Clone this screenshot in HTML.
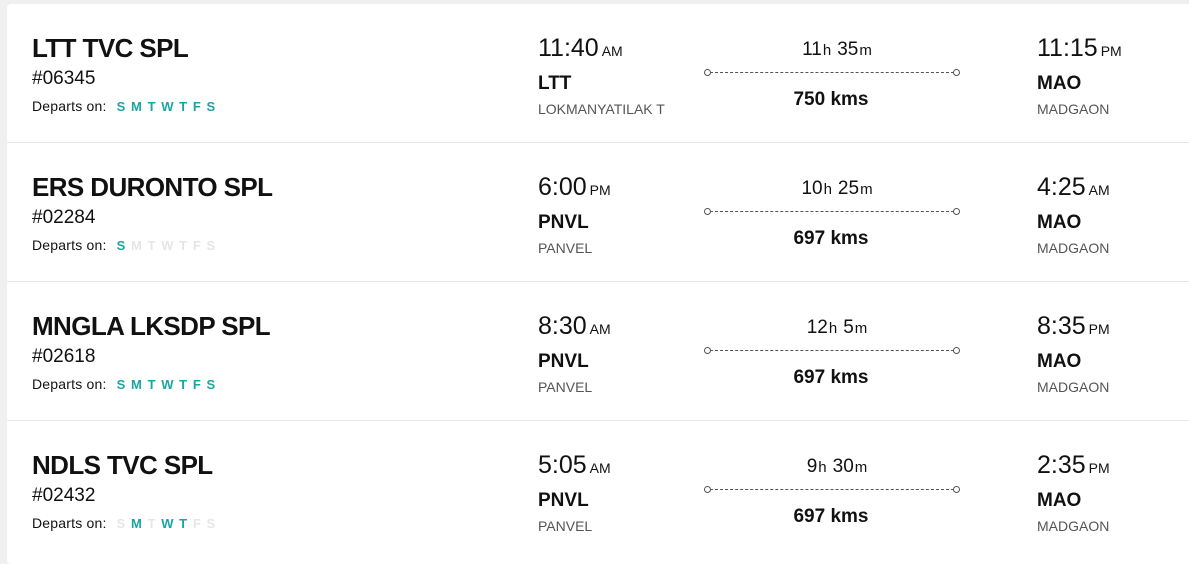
<!DOCTYPE html>
<html><head><style>
body{margin:0;background:#f0f0f0;font-family:"Liberation Sans",sans-serif;color:#111;}
.card{position:absolute;left:7px;top:4px;width:1190px;height:560px;background:#fff;border-radius:4px;}
.row{position:absolute;left:0;width:1190px;height:138px;border-bottom:1px solid #e6e6e6;}
.t{position:absolute;left:25px;top:29px;font-size:26px;font-weight:bold;letter-spacing:-0.6px;}
.n{position:absolute;left:25px;top:64px;font-size:19px;}
.d{position:absolute;left:25px;top:94px;font-size:14px;letter-spacing:0.2px}
.d b{font-weight:bold;color:#1aa5a5;font-size:13px;margin-left:5.7px;letter-spacing:0}
.d b:first-child{margin-left:6px}
.d b.o{color:#e6e6e6}
.tm{position:absolute;top:30px;font-size:25px;}
.tm span{font-size:14px;margin-left:3px}
.cd{position:absolute;top:69px;font-size:19px;font-weight:bold;}
.cn{position:absolute;top:97px;font-size:14px;color:#555;}
.du{position:absolute;left:700px;width:260px;text-align:center;top:35px;font-size:19px;}
.du span{font-size:15px;margin:0 6px 0 1px}
.du span:last-child{margin-right:0}
.ln{position:absolute;left:703px;width:244px;top:68px;border-top:1px dashed #555;height:0}
.ln:before,.ln:after{content:"";position:absolute;top:-4px;width:5px;height:5px;border:1px solid #555;border-radius:50%;background:#fff}
.ln:before{left:-6px}.ln:after{right:-6px}
.km{position:absolute;left:694px;width:260px;text-align:center;top:85px;font-size:19px;font-weight:bold;}
</style></head><body>
<div class="card">
<div class="row" style="top:0">
<div class="t">LTT TVC SPL</div><div class="n">#06345</div>
<div class="d">Departs on: <b>S</b><b>M</b><b>T</b><b>W</b><b>T</b><b>F</b><b>S</b></div>
<div class="tm" style="left:531px">11:40<span>AM</span></div><div class="cd" style="left:531px">LTT</div><div class="cn" style="left:531px">LOKMANYATILAK T</div>
<div class="du">11<span>h</span>35<span>m</span></div><div class="ln"></div><div class="km">750 kms</div>
<div class="tm" style="left:1030px">11:15<span>PM</span></div><div class="cd" style="left:1030px">MAO</div><div class="cn" style="left:1030px">MADGAON</div>
</div>
<div class="row" style="top:139px">
<div class="t">ERS DURONTO SPL</div><div class="n">#02284</div>
<div class="d">Departs on: <b>S</b><b class="o">M</b><b class="o">T</b><b class="o">W</b><b class="o">T</b><b class="o">F</b><b class="o">S</b></div>
<div class="tm" style="left:531px">6:00<span>PM</span></div><div class="cd" style="left:531px">PNVL</div><div class="cn" style="left:531px">PANVEL</div>
<div class="du">10<span>h</span>25<span>m</span></div><div class="ln"></div><div class="km">697 kms</div>
<div class="tm" style="left:1030px">4:25<span>AM</span></div><div class="cd" style="left:1030px">MAO</div><div class="cn" style="left:1030px">MADGAON</div>
</div>
<div class="row" style="top:278px">
<div class="t">MNGLA LKSDP SPL</div><div class="n">#02618</div>
<div class="d">Departs on: <b>S</b><b>M</b><b>T</b><b>W</b><b>T</b><b>F</b><b>S</b></div>
<div class="tm" style="left:531px">8:30<span>AM</span></div><div class="cd" style="left:531px">PNVL</div><div class="cn" style="left:531px">PANVEL</div>
<div class="du">12<span>h</span>5<span>m</span></div><div class="ln"></div><div class="km">697 kms</div>
<div class="tm" style="left:1030px">8:35<span>PM</span></div><div class="cd" style="left:1030px">MAO</div><div class="cn" style="left:1030px">MADGAON</div>
</div>
<div class="row" style="top:417px;border-bottom:none">
<div class="t">NDLS TVC SPL</div><div class="n">#02432</div>
<div class="d">Departs on: <b class="o">S</b><b>M</b><b class="o">T</b><b>W</b><b>T</b><b class="o">F</b><b class="o">S</b></div>
<div class="tm" style="left:531px">5:05<span>AM</span></div><div class="cd" style="left:531px">PNVL</div><div class="cn" style="left:531px">PANVEL</div>
<div class="du">9<span>h</span>30<span>m</span></div><div class="ln"></div><div class="km">697 kms</div>
<div class="tm" style="left:1030px">2:35<span>PM</span></div><div class="cd" style="left:1030px">MAO</div><div class="cn" style="left:1030px">MADGAON</div>
</div>
</div>
</body></html>
